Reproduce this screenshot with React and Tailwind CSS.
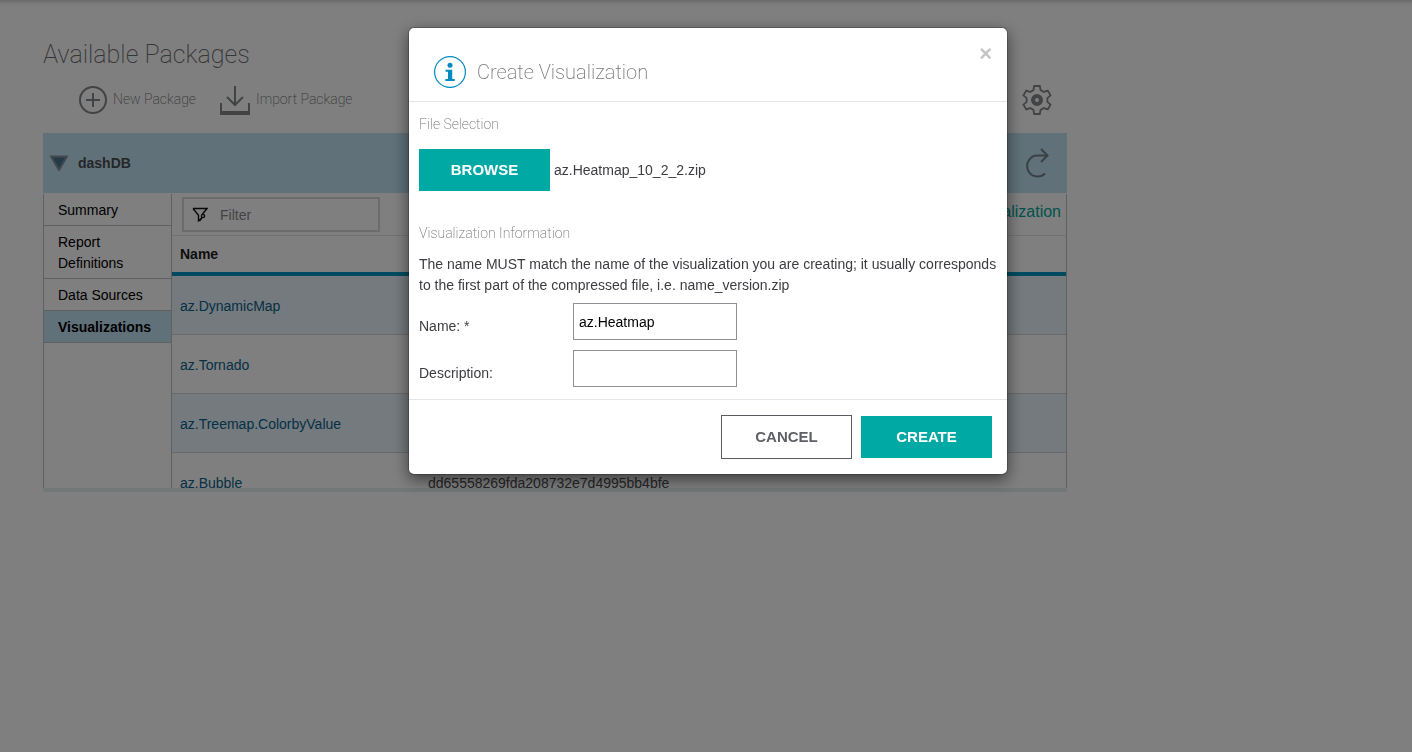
const navItems = ["Summary", "Report Definitions", "Data Sources", "Visualizations"];

const rows = [
  { name: "az.DynamicMap", id: "" },
  { name: "az.Tornado", id: "" },
  { name: "az.Treemap.ColorbyValue", id: "" },
  { name: "az.Bubble", id: "dd65558269fda208732e7d4995bb4bfe" },
];

function PlusIcon() {
  return (
    <svg width="28" height="28" viewBox="0 0 28 28" fill="none" stroke="#858688" strokeWidth="2" aria-hidden="true">
      <circle cx="14" cy="14" r="13" />
      <path d="M14 7v14M7 14h14" />
    </svg>
  );
}

function ImportIcon() {
  return (
    <svg width="30" height="30" viewBox="0 0 30 30" fill="none" stroke="#858688" strokeWidth="2" aria-hidden="true">
      <path d="M15 1v19M7 12l8 8 8-8" />
      <path d="M1 18v11M29 18v11" />
      <path d="M0 28h30" strokeWidth="4" />
    </svg>
  );
}

function GearIcon() {
  return (
    <svg width="30" height="30" viewBox="-15 -15 30 30" fill="none" stroke="#858688" strokeWidth="1.8" aria-hidden="true">
      <path d="M-2.8-14H2.8L3.6-9.9L6.77-8.07L10.72-9.42L13.52-4.58L10.37-1.83V1.83L13.52 4.58L10.72 9.42L6.77 8.07L3.6 9.9L2.8 14H-2.8L-3.6 9.9L-6.77 8.07L-10.72 9.42L-13.52 4.58L-10.37 1.83V-1.83L-13.52-4.58L-10.72-9.42L-6.77-8.07L-3.6-9.9z" />
      <circle r="4" strokeWidth="4" />
    </svg>
  );
}

function RefreshIcon() {
  return (
    <svg width="24" height="31" viewBox="0 0 24 31" fill="none" stroke="#73828b" strokeWidth="2" aria-hidden="true">
      <path d="M16 1l6.500 6.500L16 14" />
      <path d="M22 7.500H12.500A10.500 10.500 0 1 0 20 25.500" />
    </svg>
  );
}

function FunnelIcon() {
  return (
    <svg className="shrink-0" width="16" height="16" viewBox="0 0 16 16" fill="none" stroke="#111" strokeWidth="1.400" aria-hidden="true">
      <path d="M1 1.500h14l-4.500 5.500M1 1.500l5.500 6.800v5.500l2.500-2" />
      <circle cx="11" cy="9" r="1.600" />
      <path d="M10 10.500L7.500 14" />
    </svg>
  );
}

function InfoIcon() {
  return (
    <svg width="32" height="32" viewBox="0 0 32 32" aria-hidden="true">
      <circle cx="16" cy="16" r="15.400" fill="none" stroke="#008abf" strokeWidth="1.200" />
      <circle cx="16" cy="9.300" r="2.500" fill="#008abf" />
      <path d="M11.500 13.800h6.700v9.200h2.500v2h-9.400v-2h2.700v-7.200h-2.500z" fill="#008abf" />
    </svg>
  );
}

function Page() {
  return (
    <main className="ml-[43px] max-w-[1024px] pt-9">
      <h1 className="font-[Roboto] text-[25px] leading-[38px] font-extralight text-[#6d6e70]">Available Packages</h1>
      <div className="flex h-[59px] items-center pr-[15px] pb-2 pl-9 font-[Roboto] text-[14px] font-extralight text-[#6d6e70]">
        <button className="flex items-center gap-1.5"><PlusIcon />New Package</button>
        <button className="ml-6 flex items-center gap-1.5"><ImportIcon />Import Package</button>
        <button className="ml-auto" aria-label="Settings"><GearIcon /></button>
      </div>
      <div className="mb-px flex h-[60px] items-center bg-[#c0e2f2] pr-[18px] pl-[7px]">
        <button className="flex items-center gap-2.5 text-[14px] font-bold text-[#4b4d50]">
          <svg width="18" height="16" viewBox="0 0 18 16" aria-hidden="true">
            <path d="M1 1.500h16L9 15z" fill="#467590" stroke="#86939c" strokeWidth="2" />
          </svg>
          dashDB
        </button>
        <button className="ml-auto" aria-label="Refresh"><RefreshIcon /></button>
      </div>
      <div className="flex h-[298px] overflow-hidden border-b-4 border-[#e4eef0]">
        <nav className="w-[129px] shrink-0 border-x border-[#c0c0c2] text-[14px] leading-[21px]">
          {navItems.map((item) => (
            <a
              key={item}
              href="#"
              className={
                "block border-b border-[#c0c0c2] pt-1.5 pr-5 pb-1 pl-3.5 text-black " +
                (item === "Visualizations" ? "bg-[#c0e2f2] font-bold" : "")
              }
            >
              {item}
            </a>
          ))}
        </nav>
        <section className="min-w-0 flex-1 border-r border-[#c0c0c2]">
          <div className="flex h-[42px] items-start justify-between border-b border-[#e4e4e4] pt-[3px] pr-[5px] pl-2.5">
            <label className="flex h-[35px] w-[198px] items-center gap-3 border-2 border-[#d8d8d8] px-2">
              <FunnelIcon />
              <input aria-label="Filter" placeholder="Filter" className="w-full min-w-0 pt-0.5 text-[14px] outline-none placeholder:text-[#85868c]" />
            </label>
            <a href="#" className="text-[16px] leading-[30px] text-[#00a69c]">Create Visualization</a>
          </div>
          <table className="w-full table-fixed border-separate border-spacing-0 text-left text-[14px]">
            <thead>
              <tr className="h-10 text-[#1c1c1c]">
                <th className="w-[248px] border-b-4 border-[#0097c4] pl-2">Name</th>
                <th className="border-b-4 border-[#0097c4] pl-2" aria-label="Identifier" />
              </tr>
            </thead>
            <tbody>
              {rows.map((row) => (
                <tr key={row.name} className="h-[59px] odd:bg-[#e8f4fb]">
                  <td className="border-b border-[#cfd4d8] pt-0.5 pl-2"><a href="#" className="text-[#08628c]">{row.name}</a></td>
                  <td className="border-b border-[#cfd4d8] pt-0.5 pl-2 text-[#4b4d50]">{row.id}</td>
                </tr>
              ))}
            </tbody>
          </table>
        </section>
      </div>
    </main>
  );
}

function Dialog() {
  return (
    <div
      role="dialog"
      aria-modal="true"
      aria-labelledby="dialog-title"
      className="w-[600px] rounded-md border border-black/20 bg-white bg-clip-padding text-[14px] leading-[21px] text-[#3c3d42] shadow-[0_5px_15px_rgba(0,0,0,0.5)]"
    >
      <header className="flex items-start border-b border-[#e5e5e5] pt-7 pr-[15px] pb-[13px] pl-[25px]">
        <InfoIcon />
        <h2 id="dialog-title" className="ml-[11px] font-[Roboto] text-[20px] leading-8 font-extralight text-[#75767a]">
          Create Visualization
        </h2>
        <button className="-mt-3 ml-auto text-[22px] leading-[20px] font-bold text-[#c4c4c4]" aria-label="Close">×</button>
      </header>
      <form className="px-2.5 pb-3" onSubmit={(e) => e.preventDefault()}>
        <h3 className="pt-3 font-[Roboto] text-[14px] font-extralight text-[#75767a]">File Selection</h3>
        <div className="mt-3.5 flex items-center gap-1">
          <button type="button" className="h-[42px] w-[131px] bg-[#00a9a4] pb-0.5 text-[15px] font-bold text-white">BROWSE</button>
          <span>az.Heatmap_10_2_2.zip</span>
        </div>
        <h3 className="mt-8 font-[Roboto] text-[14px] font-extralight text-[#75767a]">Visualization Information</h3>
        <p className="mt-2.5 -mr-1">
          The name MUST match the name of the visualization you are creating; it usually corresponds to the first part of
          the compressed file, i.e. name_version.zip
        </p>
        <div className="mt-[7px] grid grid-cols-[154px_164px] items-center gap-y-2.5">
          <label htmlFor="name" className="pt-2.5">Name: *</label>
          <input id="name" defaultValue="az.Heatmap" className="h-[37px] border border-[#8f9095] px-[5px] text-black" />
          <label htmlFor="description" className="pt-2.5">Description:</label>
          <input id="description" className="h-[37px] border border-[#8f9095] px-[5px] text-black" />
        </div>
      </form>
      <footer className="flex items-center justify-end gap-[9px] border-t border-[#e5e5e5] p-[15px]">
        <button className="h-11 w-[131px] border border-[#5a5b60] pb-0.5 text-[15px] font-bold text-[#5f6066]">CANCEL</button>
        <button className="h-[42px] w-[131px] bg-[#00a9a4] pb-0.5 text-[15px] font-bold text-white">CREATE</button>
      </footer>
    </div>
  );
}

export default function App() {
  return (
    <div className="min-h-screen bg-white font-['Liberation_Sans',Arial,sans-serif]">
      <Page />
      <div className="fixed inset-0 flex items-start justify-center bg-black/50 pt-[27px] pl-1 shadow-[inset_0_6px_4px_-4px_rgba(0,0,0,0.2)]">
        <Dialog />
      </div>
    </div>
  );
}
